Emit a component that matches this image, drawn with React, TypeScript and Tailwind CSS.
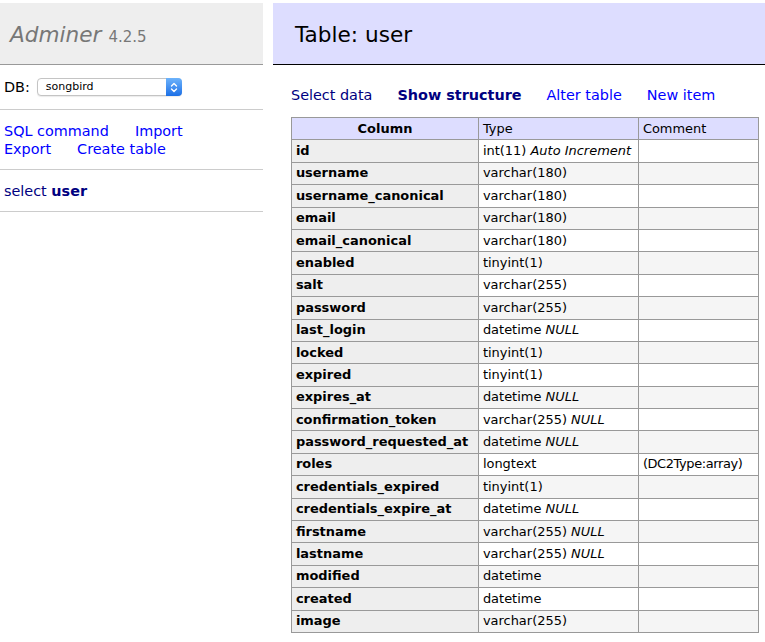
import React from "react";

type Row = { name: string; type: string; extra?: string; comment?: string };

const ROWS: Row[] = [
  { name: "id", type: "int(11)", extra: "Auto Increment" },
  { name: "username", type: "varchar(180)" },
  { name: "username_canonical", type: "varchar(180)" },
  { name: "email", type: "varchar(180)" },
  { name: "email_canonical", type: "varchar(180)" },
  { name: "enabled", type: "tinyint(1)" },
  { name: "salt", type: "varchar(255)" },
  { name: "password", type: "varchar(255)" },
  { name: "last_login", type: "datetime", extra: "NULL" },
  { name: "locked", type: "tinyint(1)" },
  { name: "expired", type: "tinyint(1)" },
  { name: "expires_at", type: "datetime", extra: "NULL" },
  { name: "confirmation_token", type: "varchar(255)", extra: "NULL" },
  { name: "password_requested_at", type: "datetime", extra: "NULL" },
  { name: "roles", type: "longtext", comment: "(DC2Type:array)" },
  { name: "credentials_expired", type: "tinyint(1)" },
  { name: "credentials_expire_at", type: "datetime", extra: "NULL" },
  { name: "firstname", type: "varchar(255)", extra: "NULL" },
  { name: "lastname", type: "varchar(255)", extra: "NULL" },
  { name: "modified", type: "datetime" },
  { name: "created", type: "datetime" },
  { name: "image", type: "varchar(255)" },
];

function DbSelect() {
  return (
    <div className="flex h-[18px] w-[145px] items-stretch rounded-[4px] border border-[#c4c4c4] bg-white shadow-[0_1px_1px_rgba(0,0,0,0.08)]">
      <span className="flex-1 pl-[8px] text-[11px] leading-[16px] text-black">songbird</span>
      <span className="-my-px -mr-px flex w-[16px] items-center justify-center rounded-r-[4px] bg-gradient-to-b from-[#6db3fb] to-[#1a6fe6]">
        <svg width="8" height="11" viewBox="0 0 8 11" fill="none" stroke="white" strokeWidth="1.4" strokeLinecap="round" strokeLinejoin="round">
          <path d="M1.5 4 L4 1.5 L6.5 4" />
          <path d="M1.5 7 L4 9.5 L6.5 7" />
        </svg>
      </span>
    </div>
  );
}

function Sidebar() {
  return (
    <div className="w-[263px] shrink-0">
      <h1 className="flex h-[62px] items-baseline border-b border-[#999] bg-[#eee] pl-[10px] pt-[18px] text-[21.6px] leading-[27px] text-[#777]">
        <span className="italic">Adminer</span>
        <span className="ml-[7px] text-[15px]">4.2.5</span>
      </h1>
      <div className="flex h-[45px] items-center gap-[7px] border-b border-[#ccc] pl-[4px]">
        <span>DB:</span>
        <DbSelect />
      </div>
      <div className="border-b border-[#ccc] py-[11.5px] pl-[4px] text-[#0000ff]">
        <div className="flex gap-[26px]">
          <a>SQL command</a>
          <a>Import</a>
        </div>
        <div className="flex gap-[26px]">
          <a>Export</a>
          <a>Create table</a>
        </div>
      </div>
      <div className="border-b border-[#ccc] py-[11.5px] pl-[4px] text-[#000080]">
        <a>select</a> <a className="font-bold">user</a>
      </div>
    </div>
  );
}

function StructureTable() {
  return (
    <table className="mt-[13px] w-[467px] table-fixed border-collapse text-[12.96px] leading-[16.2px]">
      <colgroup>
        <col className="w-[187px]" />
        <col className="w-[160px]" />
        <col className="w-[120px]" />
      </colgroup>
      <thead>
        <tr className="bg-[#ddf]">
          <th className="border border-[#999] px-[6px] py-[2.6px] text-center font-bold">Column</th>
          <td className="border border-[#999] px-[3.9px] py-[2.6px]">Type</td>
          <td className="border border-[#999] px-[3.9px] py-[2.6px]">Comment</td>
        </tr>
      </thead>
      <tbody>
        {ROWS.map((r, i) => {
          const odd = i % 2 === 1;
          return (
            <tr key={r.name}>
              <th className="whitespace-nowrap border border-[#999] bg-[#eee] px-[3.9px] py-[2.6px] text-left font-bold">
                {r.name}
              </th>
              <td
                className={
                  odd
                    ? "whitespace-nowrap border border-[#999] bg-[#f5f5f5] px-[3.9px] py-[2.6px]"
                    : "whitespace-nowrap border border-[#999] bg-white px-[3.9px] py-[2.6px]"
                }
              >
                {r.type}
                {r.extra ? (
                  <>
                    {" "}
                    <i>{r.extra}</i>
                  </>
                ) : null}
              </td>
              <td
                className={
                  odd
                    ? "whitespace-nowrap border border-[#999] bg-[#f5f5f5] px-[3.9px] py-[2.6px]"
                    : "whitespace-nowrap border border-[#999] bg-white px-[3.9px] py-[2.6px] tracking-[-0.4px]"
                }
              >
                {r.comment ?? ""}
              </td>
            </tr>
          );
        })}
      </tbody>
    </table>
  );
}

export default function App() {
  return (
    <div className="flex min-h-[642px] w-[765px] bg-white pt-[3px] font-['DejaVu_Sans',Verdana,sans-serif] text-[14.4px] leading-[18px] text-black">
      <Sidebar />
      <div className="ml-[10px] flex-1">
        <h2 className="h-[62px] border-b border-black bg-[#ddf] pl-[22px] pt-[18px] text-[21.6px] leading-[27px]">
          Table: user
        </h2>
        <div className="pl-[18px]">
          <div className="mt-[21px] flex gap-[25px]">
            <a className="text-[#000080]">Select data</a>
            <a className="font-bold text-[#000080]">Show structure</a>
            <a className="text-[#0000ff]">Alter table</a>
            <a className="text-[#0000ff]">New item</a>
          </div>
          <StructureTable />
        </div>
      </div>
    </div>
  );
}
